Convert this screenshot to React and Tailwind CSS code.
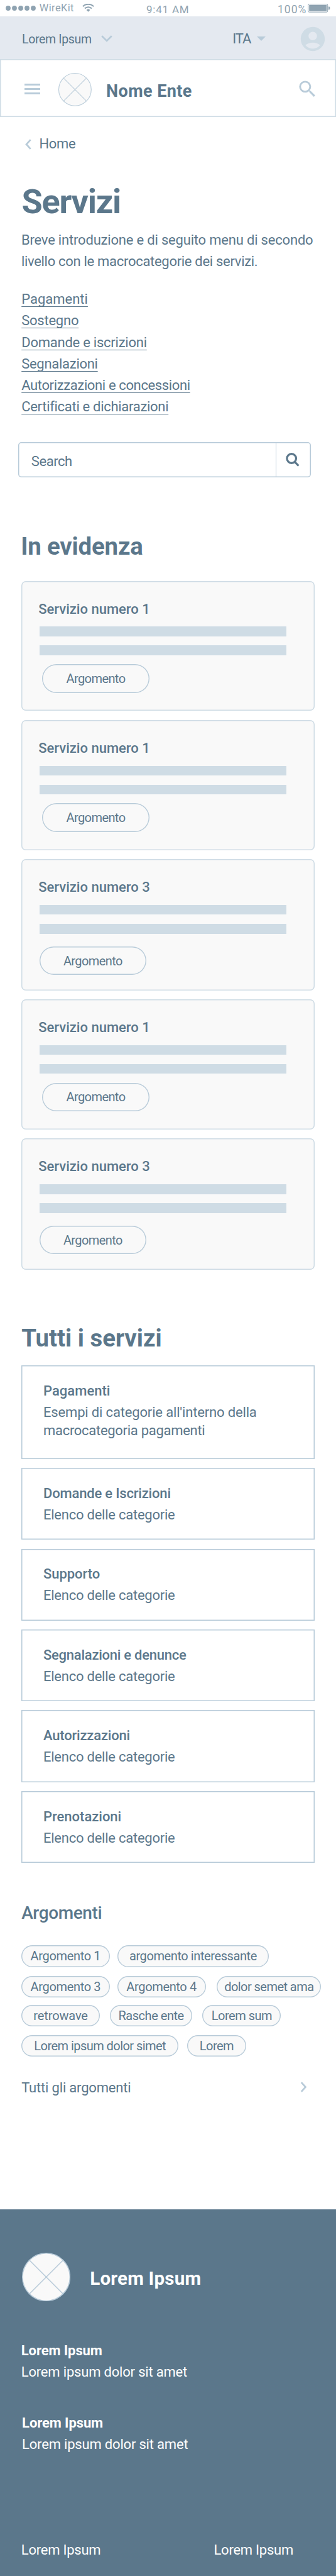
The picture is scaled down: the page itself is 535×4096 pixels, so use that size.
import React from "react";
import { MdAccountCircle, MdSearch } from "react-icons/md";

const links = [
  { label: "Pagamenti", className: "w-[104px] tracking-[0px]" },
  { label: "Sostegno", className: "w-[90.5px] tracking-[-0.23px]" },
  { label: "Domande e iscrizioni", className: "w-[198px] tracking-[-0.24px]" },
  { label: "Segnalazioni", className: "w-[121px] tracking-[-0.28px]" },
  { label: "Autorizzazioni e concessioni", className: "w-[268px] tracking-[-0.37px]" },
  { label: "Certificati e dichiarazioni", className: "w-[232px] tracking-[-0.3px]" },
];

const highlights = [
  { title: "Servizio numero 1", wide: false },
  { title: "Servizio numero 1", wide: false },
  { title: "Servizio numero 3", wide: true },
  { title: "Servizio numero 1", wide: false },
  { title: "Servizio numero 3", wide: true },
];

const services = [
  { title: "Pagamenti", tracking: "tracking-[0.03px]" },
  { title: "Domande e Iscrizioni", tracking: "tracking-[-0.18px]" },
  { title: "Supporto", tracking: "tracking-[-0.05px]" },
  { title: "Segnalazioni e denunce", tracking: "tracking-[-0.25px]" },
  { title: "Autorizzazioni", tracking: "tracking-[-0.19px]" },
  { title: "Prenotazioni", tracking: "tracking-[-0.01px]" },
];

const topicRows = [
  {
    className: "mt-[33.4px]",
    chips: [
      { label: "Argomento 1", className: "w-[140.5px] tracking-[-0.34px]" },
      { label: "argomento interessante", className: "ml-[12px] w-[241.5px] tracking-[-0.41px]" },
    ],
  },
  {
    className: "mt-[14.2px]",
    chips: [
      { label: "Argomento 3", className: "w-[140.5px] tracking-[-0.34px]" },
      { label: "Argomento 4", className: "ml-[12px] w-[140.9px] tracking-[-0.34px]" },
      { label: "dolor semet ama", className: "ml-[17.7px] w-[166.2px] tracking-[-0.55px]" },
    ],
  },
  {
    className: "mt-[11.8px]",
    chips: [
      { label: "retrowave", className: "w-[124.8px] tracking-[-0.13px]" },
      { label: "Rasche ente", className: "ml-[16.1px] w-[131px] tracking-[-0.47px]" },
      { label: "Lorem sum", className: "ml-[16.4px] w-[124.9px] tracking-[-0.5px]" },
    ],
  },
  {
    className: "mt-[14.3px]",
    chips: [
      { label: "Lorem ipsum dolor simet", className: "w-[250.1px] tracking-[-0.55px]" },
      { label: "Lorem", className: "ml-[13.6px] w-[94.2px] tracking-[-0.52px]" },
    ],
  },
];

function Placeholder({ className, stroke }) {
  return (
    <svg viewBox="0 0 100 100" className={className}>
      <g stroke="#b8cbd9" strokeWidth={stroke}>
        <circle cx="50" cy="50" r={50 - stroke / 2} fill="#f9f9f9" />
        <path d="M15.5 15.5 84.5 84.5M84.5 15.5 15.5 84.5" />
      </g>
    </svg>
  );
}

function StatusBar() {
  return (
    <div className="flex h-[25.7px] items-start text-[#8fa3b1] whitespace-nowrap leading-5">
      <svg viewBox="0 0 48 8" className="mt-[9.1px] ml-[9.2px] h-2 w-12 shrink-0 fill-[#8fa3b1]">
        <circle cx="4" cy="4" r="3.9" />
        <circle cx="14" cy="4" r="3.9" />
        <circle cx="24" cy="4" r="3.9" />
        <circle cx="34" cy="4" r="3.9" />
        <circle cx="44" cy="4" r="3.9" />
      </svg>
      <span className="mt-[3.4px] ml-[5.6px] w-[68.6px] text-[16.4px] tracking-[0.4px]">WireKit</span>
      <svg viewBox="0 0 19 13" className="mt-[6.2px] h-[13px] w-[19px] shrink-0">
        <g fill="none" stroke="#8fa3b1" strokeWidth="2.1">
          <path d="M.9 4.3a12.2 12.2 0 0 1 17.2 0" />
          <path d="M4 7.5a7.8 7.8 0 0 1 11 0" />
        </g>
        <path d="M9.5 12.8 6.6 9.9a4.1 4.1 0 0 1 5.8 0z" fill="#8fa3b1" />
      </svg>
      <span className="mt-[5px] ml-[82.6px] w-[209px] text-[17px] tracking-[0.8px]">9:41 AM</span>
      <span className="mt-[5px] w-[48px] text-[17.5px] tracking-[1px]">100%</span>
      <svg viewBox="0 0 36 14" className="mt-[6.2px] h-[14px] w-[36px] shrink-0">
        <rect x=".7" y=".6" width="31" height="12.6" rx="1.6" fill="none" stroke="#8fa3b1" strokeWidth="1" />
        <rect x="2.2" y="2" width="28" height="9.8" fill="#8fa3b1" />
        <path d="M33 4.4h.8q1.5 0 1.5 1.3v2.4q0 1.3-1.5 1.3H33z" fill="#8fa3b1" />
      </svg>
    </div>
  );
}

function TopBar() {
  return (
    <div className="flex h-[68.5px] items-start bg-[#e4e9f0]">
      <span className="mt-[25px] ml-[35px] w-[126.2px] text-[19.5px] leading-6 tracking-[-0.35px]">Lorem Ipsum</span>
      <svg viewBox="0 0 18 11" className="mt-[30px] h-[11px] w-[18px] shrink-0">
        <path d="M1.2 1.2 9 8.9l7.8-7.7" fill="none" stroke="#b8cbd9" strokeWidth="2.7" />
      </svg>
      <span className="mt-[21.5px] ml-[191px] w-[39.3px] text-[22px] leading-[30px] tracking-[-1.1px]">ITA</span>
      <svg viewBox="0 0 14 7" className="mt-[32.8px] h-[7px] w-[14px] shrink-0 fill-[#b8cbd9]">
        <path d="M0 0h14L7 7z" />
      </svg>
      <MdAccountCircle className="mt-[12.9px] ml-[51.7px] size-[46px] shrink-0 text-[#cfdce5]" />
    </div>
  );
}

function Header() {
  return (
    <div className="flex h-[91.4px] items-center shadow-[inset_0_0_0_1.5px_#cfdce5]">
      <div className="mt-[3px] ml-[38.6px] flex w-[25.5px] flex-col gap-[4px]">
        <span className="h-[3px] bg-[#b8cbd9]" />
        <span className="h-[3px] bg-[#b8cbd9]" />
        <span className="h-[3px] bg-[#b8cbd9]" />
      </div>
      <Placeholder className="mt-[6px] ml-[29.4px] size-[52.8px]" stroke={2} />
      <span className="mt-[11px] ml-[22.8px] w-[302.9px] text-[27px] leading-9 font-bold tracking-[0.42px]">Nome Ente</span>
      <MdSearch className="mt-[3.6px] size-[35px] shrink-0 text-[#b8cbd9]" />
    </div>
  );
}

function HighlightCard({ title, wide }) {
  return (
    <article
      className={
        wide
          ? "h-[208.4px] rounded-[7px] bg-[#f9f9f9] pt-[30.2px] pl-[28.4px] shadow-[inset_0_0_0_1.5px_#cfdce5]"
          : "h-[206.8px] rounded-[7px] bg-[#f9f9f9] pt-[30.2px] pl-[28.4px] shadow-[inset_0_0_0_1.5px_#cfdce5]"
      }
    >
      <h3 className="-ml-[1.4px] text-[22px] leading-[30px] font-medium">{title}</h3>
      <div className="mt-[12.6px] flex w-[393.4px] flex-col gap-[14.5px]">
        <div className="h-[15.6px] bg-[#cfdce5]" />
        <div className="h-[15.6px] bg-[#cfdce5]" />
      </div>
      <div
        className={
          wide
            ? "mt-[20.2px] flex h-[45.5px] w-[170.6px] items-center justify-center rounded-full text-[20px] tracking-[-0.58px] shadow-[inset_0_0_0_1.4px_#b8cbd9]"
            : "mt-[14.2px] ml-[4.6px] flex h-[45.5px] w-[170.6px] items-center justify-center rounded-full text-[20px] tracking-[-0.58px] shadow-[inset_0_0_0_1.4px_#b8cbd9]"
        }
      >
        Argomento
      </div>
    </article>
  );
}

function ServiceCard({ title, tracking, first }) {
  return (
    <article
      className={
        first
          ? "h-[148.6px] pt-[25.7px] pl-[34.8px] shadow-[inset_0_0_0_1.5px_#b8cbd9]"
          : "h-[114.2px] pt-[25.7px] pl-[34.8px] shadow-[inset_0_0_0_1.5px_#b8cbd9]"
      }
    >
      <h3 className={`text-[22px] leading-[30px] font-medium ${tracking}`}>{title}</h3>
      {first ? (
        <p className="mt-[5.2px] text-[22px] leading-[28.6px]">
          <span className="block tracking-[-0.16px]">Esempi di categorie all'interno della</span>
          <span className="block tracking-[-0.29px]">macrocategoria pagamenti</span>
        </p>
      ) : (
        <p className="mt-[5.2px] text-[22px] leading-[28.6px] tracking-[-0.24px]">Elenco delle categorie</p>
      )}
    </article>
  );
}

function Footer() {
  return (
    <footer className="mt-[178.1px] h-[582.4px] bg-[#5b778b] pt-[68.8px] pl-[33.8px] text-white">
      <div className="flex items-center">
        <Placeholder className="ml-[1px] size-[77.2px]" stroke={2} />
        <span className="mt-[5px] ml-[31.2px] text-[29.6px] leading-10 font-bold tracking-[0.2px]">Lorem Ipsum</span>
      </div>
      <div className="mt-[64.3px] text-[22px] leading-[30px]">
        <p className="font-bold tracking-[-0.1px]">Lorem Ipsum</p>
        <p className="mt-1 tracking-[-0.19px]">Lorem ipsum dolor sit amet</p>
      </div>
      <div className="mt-[50.1px] ml-[1.3px] text-[22px] leading-[30px]">
        <p className="font-bold tracking-[-0.1px]">Lorem Ipsum</p>
        <p className="mt-1 tracking-[-0.19px]">Lorem ipsum dolor sit amet</p>
      </div>
      <div className="mt-[138.7px] flex text-[22px] leading-[30px] tracking-[-0.24px]">
        <span className="w-[306.7px]">Lorem Ipsum</span>
        <span>Lorem Ipsum</span>
      </div>
    </footer>
  );
}

export default function App() {
  return (
    <div className="flex h-[4096px] w-[535px] flex-col overflow-hidden bg-white font-[Roboto,sans-serif] whitespace-nowrap text-[#5b778b]">
      <StatusBar />
      <TopBar />
      <Header />

      <main className="flex flex-col pl-[34.2px]">
        <div className="mt-[28.7px] flex items-center text-[22px] leading-[30px]">
          <svg viewBox="0 0 10 17" className="ml-[6px] h-[17px] w-[10px]">
            <path d="M8.7 1.2 2 8.5l6.7 7.3" fill="none" stroke="#b8cbd9" strokeWidth="2.7" />
          </svg>
          <span className="ml-[12.3px] tracking-[-0.31px]">Home</span>
        </div>

        <h1 className="mt-[47px] ml-[0.4px] text-[54px] leading-[60px] font-bold tracking-[-1.23px]">Servizi</h1>
        <p className="mt-[13.6px] -ml-[0.3px] text-[22px] leading-[34.3px]">
          <span className="block tracking-[-0.19px]">Breve introduzione e di seguito menu di secondo</span>
          <span className="block tracking-[-0.3px]">livello con le macrocategorie dei servizi.</span>
        </p>

        <nav className="mt-[25.7px] flex flex-col text-[22px] leading-[34.25px]">
          {links.map((l) => (
            <a
              key={l.label}
              className={`underline decoration-[1px] underline-offset-[4px] [text-decoration-skip-ink:none] ${l.className}`}
            >
              {l.label}
            </a>
          ))}
        </nav>

        <div className="mt-[37.9px] -ml-[5.2px] flex h-[56.6px] w-[465.7px] rounded-[5px] shadow-[inset_0_0_0_1.5px_#b8cbd9]">
          <span className="mt-[16.6px] w-[410px] pl-[20.8px] text-[22px] leading-[30px] tracking-[-0.43px]">Search</span>
          <div className="flex h-full flex-1 border-l border-[#b8cbd9] pt-[17.5px] pl-[15px]">
            <svg viewBox="0 0 22 22" className="size-[22px] fill-none stroke-[#5b778b]">
              <circle cx="9.2" cy="9" r="7.3" strokeWidth="3.2" />
              <path d="M14 14.2 20.4 20.6" strokeWidth="3.2" />
            </svg>
          </div>
        </div>

        <h2 className="mt-[88.1px] -ml-[1px] text-[38.4px] leading-[44px] font-bold tracking-[-0.17px]">In evidenza</h2>
        <section className="mt-[32.3px] flex w-[466.6px] flex-col gap-[14.5px]">
          {highlights.map((h, i) => (
            <HighlightCard key={i} {...h} />
          ))}
        </section>

        <h2 className="mt-[87.5px] text-[38.4px] leading-[44px] font-bold">Tutti i servizi</h2>
        <section className="mt-[21.1px] flex w-[466.6px] flex-col gap-[14.25px]">
          {services.map((s, i) => (
            <ServiceCard key={s.title} {...s} first={i === 0} />
          ))}
        </section>

        <h2 className="mt-[61.9px] text-[28px] leading-9 font-medium tracking-[-0.38px]">Argomenti</h2>
        {topicRows.map((row) => (
          <div key={row.className} className={`flex ${row.className}`}>
            {row.chips.map((c) => (
              <span
                key={c.label}
                className={`flex h-[34.2px] shrink-0 items-center justify-center rounded-full bg-[#f9f9f9] text-[20px] shadow-[inset_0_0_0_1.4px_#b8cbd9] ${c.className}`}
              >
                {c.label}
              </span>
            ))}
          </div>
        ))}

        <div className="mt-[34.7px] flex items-center text-[22px] leading-[30px]">
          <span className="w-[443.5px] tracking-[-0.18px]">Tutti gli argomenti</span>
          <svg viewBox="0 0 10 17" className="-mt-[3px] h-[17px] w-[11px]">
            <path d="M1.3 1.2 8 8.5l-6.7 7.3" fill="none" stroke="#b8cbd9" strokeWidth="2.7" />
          </svg>
        </div>
      </main>

      <Footer />
    </div>
  );
}
